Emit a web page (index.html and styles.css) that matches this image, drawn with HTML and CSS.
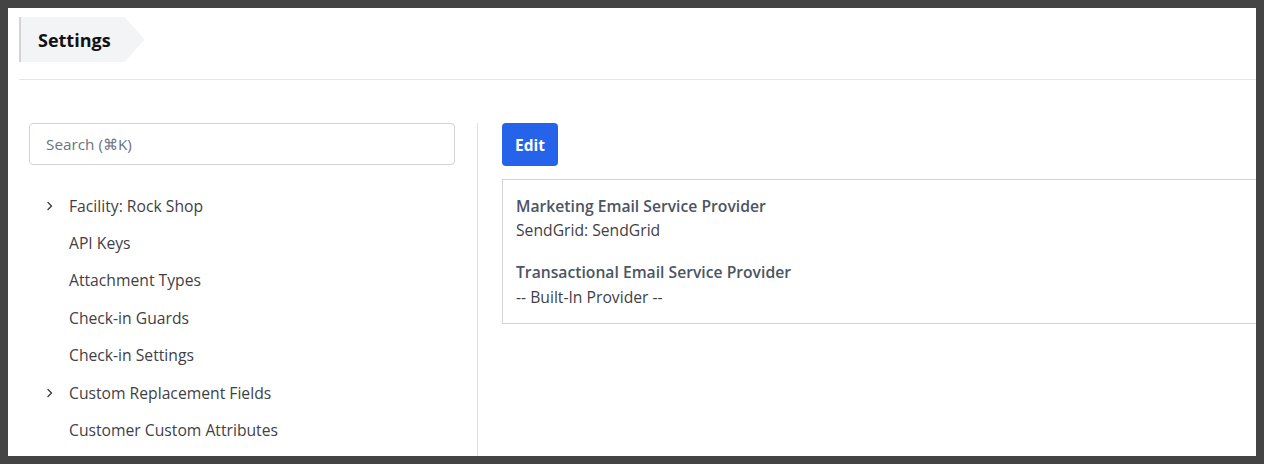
FILE: index.html
```html
<!DOCTYPE html>
<html lang="en">
<head>
<meta charset="utf-8">
<title>Settings</title>
<link rel="stylesheet" href="styles.css">
</head>
<body>
<div class="page">
  <header class="header">
    <div class="crumb">Settings</div>
  </header>
  <div class="main">
    <aside class="sidebar">
      <div class="search">Search (⌘K)</div>
      <ul class="tree">
        <li class="item"><span class="chev"><svg width="8" height="12" viewBox="0 0 8 12"><path d="M2 2.5 L5.5 6 L2 9.5" fill="none" stroke="#3f3f46" stroke-width="1.4" stroke-linecap="round" stroke-linejoin="round"/></svg></span>Facility: Rock Shop</li>
        <li class="item"><span class="chev"></span>API Keys</li>
        <li class="item"><span class="chev"></span>Attachment Types</li>
        <li class="item"><span class="chev"></span>Check-in Guards</li>
        <li class="item"><span class="chev"></span>Check-in Settings</li>
        <li class="item"><span class="chev"><svg width="8" height="12" viewBox="0 0 8 12"><path d="M2 2.5 L5.5 6 L2 9.5" fill="none" stroke="#3f3f46" stroke-width="1.4" stroke-linecap="round" stroke-linejoin="round"/></svg></span>Custom Replacement Fields</li>
        <li class="item"><span class="chev"></span>Customer Custom Attributes</li>
      </ul>
    </aside>
    <section class="content">
      <button class="btn">Edit</button>
      <div class="card">
        <div class="field">
          <div class="label">Marketing Email Service Provider</div>
          <div class="value">SendGrid: SendGrid</div>
        </div>
        <div class="field">
          <div class="label">Transactional Email Service Provider</div>
          <div class="value">-- Built-In Provider --</div>
        </div>
      </div>
    </section>
  </div>
</div>
</body>
</html>
```
FILE: styles.css
```css
html {
  background: #444444;
}
body {
  margin: 8px;
  height: 448px;
  background: #ffffff;
  overflow: hidden;
  font-family: "Open Sans", "Noto Sans", sans-serif;
  color: #3f3f46;
}
.page {
  width: 1300px;
  padding: 9px 0 0 11px;
}
.header {
  padding-bottom: 17px;
  border-bottom: 1px solid #e5e5e5;
}
.crumb {
  display: inline-flex;
  align-items: center;
  height: 45px;
  padding: 0 34px 0 17px;
  border-left: 2px solid #d4d4d4;
  background: #f3f4f6;
  clip-path: polygon(0 0, calc(100% - 20px) 0, 100% 50%, calc(100% - 20px) 100%, 0 100%);
  font-size: 18px;
  font-weight: 700;
  color: #111111;
}
.main {
  display: flex;
  padding-top: 43px;
}
.sidebar {
  flex: 0 0 426px;
  padding: 0 22px 0 10px;
  border-right: 1px solid #e0e0e0;
  height: 333px;
}
.search {
  height: 42px;
  box-sizing: border-box;
  border: 1px solid #d4d4d4;
  border-radius: 4px;
  padding: 0 16px;
  display: flex;
  align-items: center;
  font-size: 15.3px;
  color: #6b7280;
}
.tree {
  list-style: none;
  margin: 22px 0 0;
  padding: 0;
}
.item {
  display: flex;
  align-items: center;
  height: 37.4px;
  font-size: 15.7px;
  color: #3f3f46;
}
.chev {
  width: 40px;
  padding-left: 17px;
  box-sizing: border-box;
  display: flex;
  align-items: center;
}
.content {
  padding-left: 24px;
  flex: 1;
}
.btn {
  display: block;
  height: 43px;
  padding: 0 13px;
  border: none;
  border-radius: 4px;
  background: #2563eb;
  color: #ffffff;
  font-family: inherit;
  font-size: 15.5px;
  font-weight: 700;
}
.card {
  margin-top: 13px;
  border: 1px solid #d4d4d4;
  padding: 14px 13px 12px;
  width: 800px;
}
.field {
  margin-bottom: 17px;
}
.field:last-child {
  margin-bottom: 0;
}
.label {
  font-size: 15.7px;
  font-weight: 600;
  color: #4b5563;
  line-height: 24px;
}
.value {
  font-size: 15.7px;
  color: #3f3f46;
  line-height: 25px;
}
.field:last-child .value {
  line-height: 27px;
}
```
